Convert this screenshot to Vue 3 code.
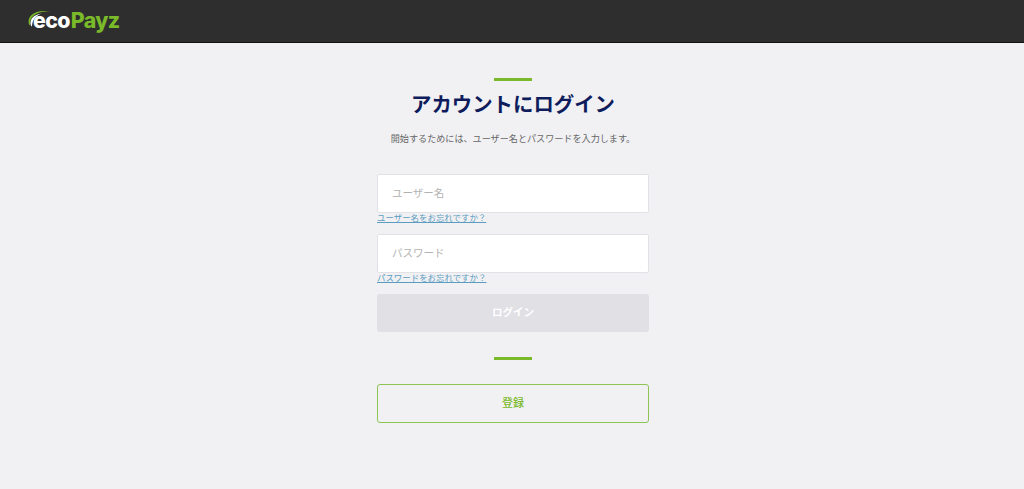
<script setup>
const fields = [
  { placeholder: 'ユーザー名', type: 'text', link: 'ユーザー名をお忘れですか？' },
  { placeholder: 'パスワード', type: 'password', link: 'パスワードをお忘れですか？' }
]
</script>

<template>
  <div class="page">
    <header class="topbar">
      <div class="logo">
        <svg class="swoosh" width="30" height="22" viewBox="0 0 30 22" aria-hidden="true">
          <path d="M2.4 16.5 C-1.5 7 9 -0.5 24 2.8 C13 1.5 3.6 5.5 3 14 C3 15.5 2.8 17 2.4 16.5 Z" fill="#7ab929" />
          <path d="M4 17 C1.5 10 8 5 15 4.5 C9 6.5 6 10 5.2 15.5 C5 17 4.3 18 4 17 Z" fill="#fff" />
        </svg>
        <span class="eco">eco</span><span class="payz">Payz</span>
      </div>
    </header>
    <main class="content">
      <div class="rule"></div>
      <h1 class="title">アカウントにログイン</h1>
      <p class="lead">開始するためには、ユーザー名とパスワードを入力します。</p>
      <form class="form" @submit.prevent>
        <div v-for="f in fields" :key="f.type" class="field">
          <input class="input" :type="f.type" :placeholder="f.placeholder" />
          <a class="forgot" href="#">{{ f.link }}</a>
        </div>
        <button class="login" type="submit" disabled>ログイン</button>
      </form>
      <div class="rule second"></div>
      <button class="register" type="button">登録</button>
    </main>
  </div>
</template>

<style>
html, body { margin: 0; background: #f1f1f4; }
</style>

<style scoped>
.page {
  min-height: 489px;
  background: #f1f1f4;
  font-family: "Noto Sans CJK JP", "Noto Sans", sans-serif;
}
.topbar {
  box-sizing: border-box;
  height: 43px;
  background: #2e2e2e;
  border-bottom: 1px solid #111;
  padding-left: 29px;
  display: flex;
  align-items: flex-start;
}
.logo {
  position: relative;
  display: flex;
  align-items: baseline;
  margin-top: 7px;
  font-family: Inter, sans-serif;
  font-weight: 800;
  font-size: 21.3px;
  line-height: 26px;
  letter-spacing: -0.6px;
}
.swoosh { position: absolute; left: -2px; top: 2px; }
.eco { color: #fff; position: relative; margin-left: 4px; }
.payz { color: #7ab929; position: relative; margin-left: 1px; }
.content {
  display: flex;
  flex-direction: column;
  align-items: center;
  padding: 35px 0 0 2px;
}
.rule {
  width: 38px;
  height: 3px;
  background: #7ab929;
}
.rule.second { margin-top: 25px; }
.title {
  margin: 6px 0 0;
  font-size: 20.4px;
  line-height: 32px;
  font-weight: 700;
  color: #0e1c5c;
}
.lead {
  margin: 12px 0 0;
  font-size: 9.1px;
  line-height: 14px;
  color: #666;
}
.form {
  width: 272px;
  margin-top: 29px;
  display: flex;
  flex-direction: column;
  gap: 11.5px;
}
.field { display: flex; flex-direction: column; }
.input {
  box-sizing: border-box;
  width: 100%;
  height: 38.5px;
  padding: 0 14px 2px;
  background: #fff;
  border: 1px solid #e2e2e6;
  border-radius: 2px;
  outline: none;
  font: inherit;
  font-size: 10.5px;
}
.input::placeholder { color: #b2b2b2; opacity: 1; }
.forgot {
  font-size: 8.45px;
  line-height: 8px;
  height: 10px;
  color: #5b9cc0;
  text-decoration: underline;
}
.login {
  height: 38px;
  border: none;
  border-radius: 3px;
  background: #e0e0e5;
  color: #fff;
  font: inherit;
  font-size: 10.5px;
  font-weight: 700;
  padding: 0 0 4px;
}
.register {
  box-sizing: border-box;
  width: 272px;
  height: 39px;
  margin-top: 24px;
  background: transparent;
  border: 1px solid #8cc552;
  border-radius: 3px;
  color: #7ab929;
  font: inherit;
  font-size: 11px;
  font-weight: 500;
  padding: 0 0 4px;
}
</style>
